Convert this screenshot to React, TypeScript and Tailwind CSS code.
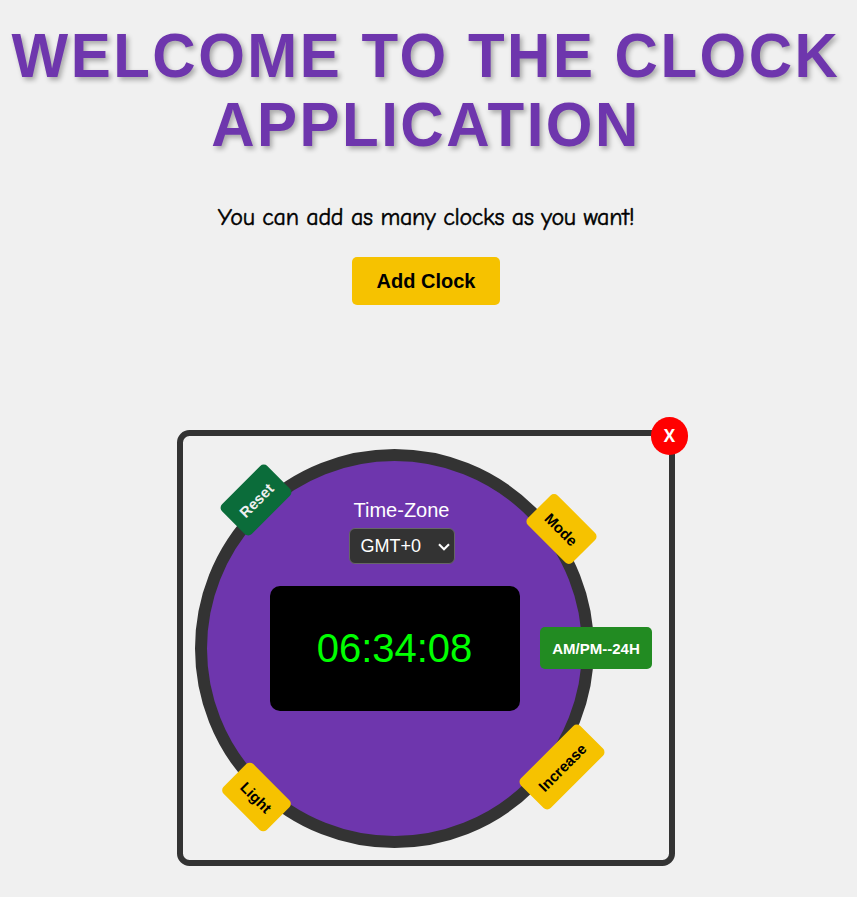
import React from "react";

const dial =
  "absolute flex h-[42px] items-center justify-center rounded-[5px] text-[15px] font-bold leading-none whitespace-nowrap";

export default function App() {
  return (
    <main className="flex h-[897px] w-[857px] flex-col items-center overflow-hidden bg-[#f0f0f0] pr-[5px] font-['Liberation_Sans',Arial,sans-serif]">
      <h1 className="mt-[25px] mb-[2px] w-full origin-center scale-y-[1.045] text-center text-[60px] leading-[66px] font-bold tracking-[2.5px] text-[#6e36ad] uppercase [text-shadow:2.5px_2.5px_5px_rgba(0,0,0,0.3)]">
        Welcome to the Clock Application
      </h1>
      <p className="mt-[40px] h-[36px] text-[24px] leading-[36px] tracking-[-0.3px] whitespace-nowrap text-black font-['Comic_Sans_MS','Comic_Neue',Lato,cursive] [-webkit-text-stroke:0.5px_black]">
        You can add as many clocks as you want!
      </p>
      <button className="mt-[22px] h-[48px] w-[148px] rounded-[5px] bg-[#f6c200] text-[20px] font-bold text-black">
        Add Clock
      </button>

      <section className="relative mt-[125px] h-[436px] w-[498px] rounded-[12.5px] border-6 border-[#333333] p-3">
        <button className="absolute top-[-19px] right-[-19px] flex h-[38px] w-[37px] items-center justify-center rounded-full bg-[#ff0000] text-[17px] font-bold text-white font-['Open_Sans',sans-serif]">
          X
        </button>

        <div className="relative mt-px flex h-[399px] w-[399px] flex-col items-center rounded-full border-12 border-[#333333] bg-[#6e36ad]">
          <label className="mt-[38px] ml-[14px] h-[23px] text-[20px] leading-[23px] text-white">Time-Zone</label>
          <div className="mt-[6px] ml-[14px] flex h-[36px] w-[106px] items-center justify-between rounded-[6px] border border-[#666666] bg-[#333333] pr-[4px] pl-[11px] text-[18px] text-white">
            <span>GMT+0</span>
            <svg width="12" height="8" viewBox="0 0 12 8" fill="none" stroke="white" strokeWidth="2.1" className="mt-[2px]">
              <path d="M1 1.2 6 6.2 11 1.2" />
            </svg>
          </div>
          <div className="mt-[22px] flex h-[125px] w-[250px] items-center justify-center rounded-[10px] bg-black pb-[2px] text-[40px] text-[#00ff00]">
            06:34:08
          </div>

          <button className={`${dial} top-[18px] left-[17px] w-[64px] -rotate-45 bg-[#0b6c3a] text-[#efefef]`}>Reset</button>
          <button className={`${dial} top-[47px] left-[323px] w-[63px] rotate-45 bg-[#f6c200] text-black`}>Mode</button>
          <button className={`${dial} top-[166px] left-[333px] w-[112px] bg-[#228b22] text-white`}>AM/PM--24H</button>
          <button className={`${dial} top-[285px] left-[313px] w-[84px] -rotate-45 bg-[#f6c200] text-black`}>Increase</button>
          <button className={`${dial} top-[315px] left-[18.5px] w-[61px] rotate-45 bg-[#f6c200] text-black`}>Light</button>
        </div>
      </section>
    </main>
  );
}
